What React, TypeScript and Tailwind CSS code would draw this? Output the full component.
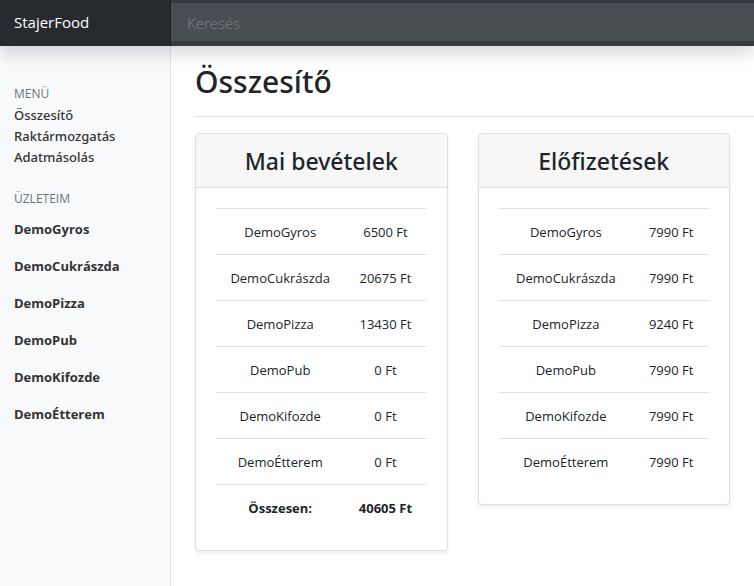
type Row = { name: string; amount: string };

const menu = ["Összesítő", "Raktármozgatás", "Adatmásolás"];
const shops = ["DemoGyros", "DemoCukrászda", "DemoPizza", "DemoPub", "DemoKifozde", "DemoÉtterem"];

const income: Row[] = [
  { name: "DemoGyros", amount: "6500 Ft" },
  { name: "DemoCukrászda", amount: "20675 Ft" },
  { name: "DemoPizza", amount: "13430 Ft" },
  { name: "DemoPub", amount: "0 Ft" },
  { name: "DemoKifozde", amount: "0 Ft" },
  { name: "DemoÉtterem", amount: "0 Ft" },
];

const subscriptions: Row[] = [
  { name: "DemoGyros", amount: "7990 Ft" },
  { name: "DemoCukrászda", amount: "7990 Ft" },
  { name: "DemoPizza", amount: "9240 Ft" },
  { name: "DemoPub", amount: "7990 Ft" },
  { name: "DemoKifozde", amount: "7990 Ft" },
  { name: "DemoÉtterem", amount: "7990 Ft" },
];

function Card({ title, rows, total, nameWidth }: { title: string; rows: Row[]; total?: string; nameWidth: string }) {
  return (
    <section className="min-w-0 flex-1 rounded border border-[#dfdfdf] bg-white text-center shadow-[0_2px_4px_rgba(0,0,0,0.075)]">
      <h2 className="rounded-t border-b border-[#dfdfdf] bg-[#f7f7f7] px-5 pt-[13px] pb-[11px] font-['Noto_Sans','Open_Sans',sans-serif] text-[23px] leading-[29px] font-medium">
        {title}
      </h2>
      <div className="p-5 pb-[19px]">
        <table className="w-full table-fixed">
          <colgroup>
            <col className={nameWidth} />
            <col />
          </colgroup>
          <tbody>
            {rows.map((row) => (
              <tr key={row.name} className="h-[46px] border-t border-[#dee2e6]">
                <td className="pt-[2px]">{row.name}</td>
                <td className="pt-[2px]">{row.amount}</td>
              </tr>
            ))}
            {total && (
              <tr className="h-[46px] border-t border-[#dee2e6] font-bold">
                <td className="pt-[2px]">Összesen:</td>
                <td className="pt-[2px]">{total}</td>
              </tr>
            )}
          </tbody>
        </table>
      </div>
    </section>
  );
}

export default function App() {
  return (
    <div className="flex min-h-screen flex-col bg-white font-['Open_Sans','Noto_Sans',sans-serif] text-[13px] leading-[21px] text-[#212529]">
      <header className="relative flex h-[46px] bg-[#343a40] shadow-[0_8px_16px_rgba(0,0,0,0.15)]">
        <a href="#" className="flex w-[171px] shrink-0 items-center bg-[#272a2e] px-[14px] pb-[2px] text-[15px] text-white shadow-[inset_-1px_0_0_rgba(0,0,0,0.25)]">
          StajerFood
        </a>
        <input
          type="text"
          aria-label="Keresés"
          placeholder="Keresés"
          className="mt-[3px] mb-[5px] min-w-0 flex-1 bg-[#494e52] px-4 pt-[2px] text-[15px] font-light text-white outline-none placeholder:text-[#7b8187]"
        />
      </header>
      <div className="flex flex-1">
        <nav className="w-[171px] shrink-0 border-r border-[#dee0e2] bg-[#f8f9fa] px-[14px] pt-[37px] text-[#333333]">
          <h6 className="text-[12px] text-[#6c757d]">MENÜ</h6>
          <ul className="pt-px font-['Noto_Sans','Open_Sans',sans-serif] font-medium">
            {menu.map((item) => (
              <li key={item}><a href="#">{item}</a></li>
            ))}
          </ul>
          <h6 className="mt-5 text-[12px] text-[#6c757d]">ÜZLETEIM</h6>
          <ul className="mt-[10px] flex flex-col gap-4 font-bold">
            {shops.map((shop) => (
              <li key={shop}><a href="#">{shop}</a></li>
            ))}
          </ul>
        </nav>
        <main className="min-w-0 flex-1 pt-4 pl-6">
          <h1 className="mb-4 border-b border-[#dee2e6] pb-[14px] font-['Noto_Sans','Open_Sans',sans-serif] text-[30px] leading-[40px] font-medium">
            Összesítő
          </h1>
          <div className="flex items-start gap-[30px] pr-6">
            <Card title="Mai bevételek" rows={income} total="40605 Ft" nameWidth="w-[61%]" />
            <Card title="Előfizetések" rows={subscriptions} nameWidth="w-[64%]" />
          </div>
        </main>
      </div>
    </div>
  );
}
